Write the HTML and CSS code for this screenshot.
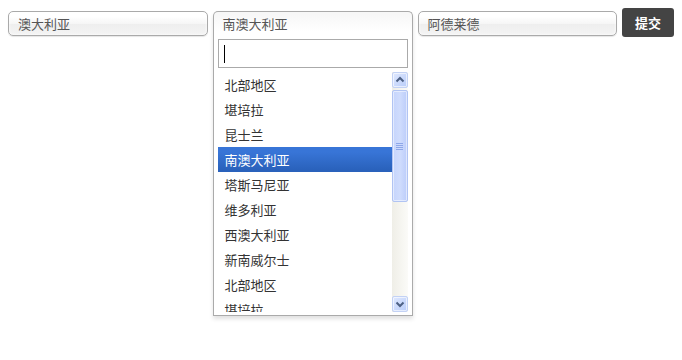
FILE: index.html
```html
<!DOCTYPE html>
<html lang="zh">
<head>
<meta charset="utf-8">
<title>选择地区</title>
<link rel="stylesheet" href="styles.css">
</head>
<body>
<div class="bar">
  <div class="select"><span class="value">澳大利亚</span></div>
  <div class="select-wrap">
    <div class="select open"><span class="value">南澳大利亚</span></div>
    <div class="drop">
      <div class="search"><div class="input"><span class="caret"></span></div></div>
      <div class="results">
        <ul class="list">
          <li>北部地区</li>
          <li>堪培拉</li>
          <li>昆士兰</li>
          <li class="hl">南澳大利亚</li>
          <li>塔斯马尼亚</li>
          <li>维多利亚</li>
          <li>西澳大利亚</li>
          <li>新南威尔士</li>
          <li>北部地区</li>
          <li class="partial">堪培拉</li>
        </ul>
        <div class="scrollbar">
          <div class="sb-btn"><svg width="14" height="14" viewBox="0 0 14 14"><path d="M3.5 8.5 L7 5 L10.5 8.5" fill="none" stroke="#4d6185" stroke-width="2"/></svg></div>
          <div class="sb-track">
            <div class="sb-thumb"><svg width="8" height="8" viewBox="0 0 8 8"><path d="M0 1.5h7M0 3.5h7M0 5.5h7M0 7.5h7" stroke="#8ea7e8" stroke-width="1"/></svg></div>
          </div>
          <div class="sb-btn"><svg width="14" height="14" viewBox="0 0 14 14"><path d="M3.5 5.5 L7 9 L10.5 5.5" fill="none" stroke="#4d6185" stroke-width="2"/></svg></div>
        </div>
      </div>
    </div>
  </div>
  <div class="select"><span class="value">阿德莱德</span></div>
  <button class="submit">提交</button>
</div>
</body>
</html>
```
FILE: styles.css
```css
html, body {
  margin: 0;
  padding: 0;
  background: #fff;
}
body {
  padding: 8px;
  font-family: "Noto Sans CJK SC", "Noto Sans", sans-serif;
  font-size: 13px;
}
.bar {
  display: flex;
  align-items: flex-start;
  gap: 5px;
}
.select {
  box-sizing: border-box;
  width: 200px;
  height: 25px;
  margin-top: 3px;
  border: 1px solid #aaa;
  border-radius: 5px;
  background: linear-gradient(#fff 20%, #f6f6f6 50%, #eee 52%, #f4f4f4 100%);
  box-shadow: inset 0 0 3px #fff, 0 1px 1px rgba(0,0,0,0.1);
  color: #555;
  line-height: 23px;
  padding-left: 9px;
  white-space: nowrap;
}
.select-wrap {
  width: 200px;
  margin-top: 3px;
  display: flex;
  flex-direction: column;
  box-shadow: 0 3px 4px rgba(0,0,0,0.12);
  border-radius: 5px 5px 0 0;
}
.select-wrap .select {
  margin-top: 0;
}
.select.open {
  border-bottom: 0;
  height: 25px;
  line-height: 24px;
  border-radius: 5px 5px 0 0;
  background: linear-gradient(#f7f7f7 10%, #fff 80%);
  box-shadow: none;
}
.drop {
  box-sizing: border-box;
  width: 200px;
  border: 1px solid #aaa;
  border-top: 0;
  background: #fff;
}
.search {
  padding: 3px 4px 4px 4px;
}
.input {
  box-sizing: border-box;
  height: 29px;
  border: 1px solid #aaa;
  padding-left: 5px;
  display: flex;
  align-items: center;
}
.caret {
  display: block;
  width: 1px;
  height: 18px;
  background: #000;
}
.results {
  display: flex;
  margin: 0 4px 3px 0;
  padding-left: 4px;
  height: 240px;
}
.list {
  flex: 1;
  margin: 0;
  padding: 0;
  list-style: none;
  overflow: hidden;
}
.list li {
  height: 25px;
  line-height: 25px;
  padding: 0 7px;
  color: #333;
  white-space: nowrap;
}
.list li.hl {
  color: #fff;
  background: linear-gradient(#3875d7 20%, #2a62bc 90%);
}
.scrollbar {
  width: 16px;
  display: flex;
  flex-direction: column;
  background: linear-gradient(to right, #efeee7, #fbfbf8);
}
.sb-btn {
  box-sizing: border-box;
  height: 16px;
  border: 1px solid #c3d2f5;
  border-radius: 2px;
  background: linear-gradient(135deg, #dfe8fe, #b9cdfa);
  display: flex;
  align-items: center;
  justify-content: center;
  box-shadow: inset 0 0 0 1px rgba(255,255,255,0.6);
}
.sb-track {
  flex: 1;
  padding-top: 2px;
}
.sb-thumb {
  box-sizing: border-box;
  height: 112px;
  border: 1px solid #b1c4f3;
  border-radius: 2px;
  background: linear-gradient(to right, #c6d5fc, #cfdcfd 50%, #bccdfa);
  box-shadow: inset 0 0 0 1px rgba(255,255,255,0.5);
  display: flex;
  align-items: center;
  justify-content: center;
}
.submit {
  box-sizing: border-box;
  height: 29px;
  width: 52px;
  padding: 0;
  margin: 0;
  border: 0;
  border-radius: 3px;
  background: #444;
  color: #fff;
  font-family: "Noto Sans CJK SC", "Noto Sans", sans-serif;
  font-size: 13px;
  font-weight: bold;
}
```
